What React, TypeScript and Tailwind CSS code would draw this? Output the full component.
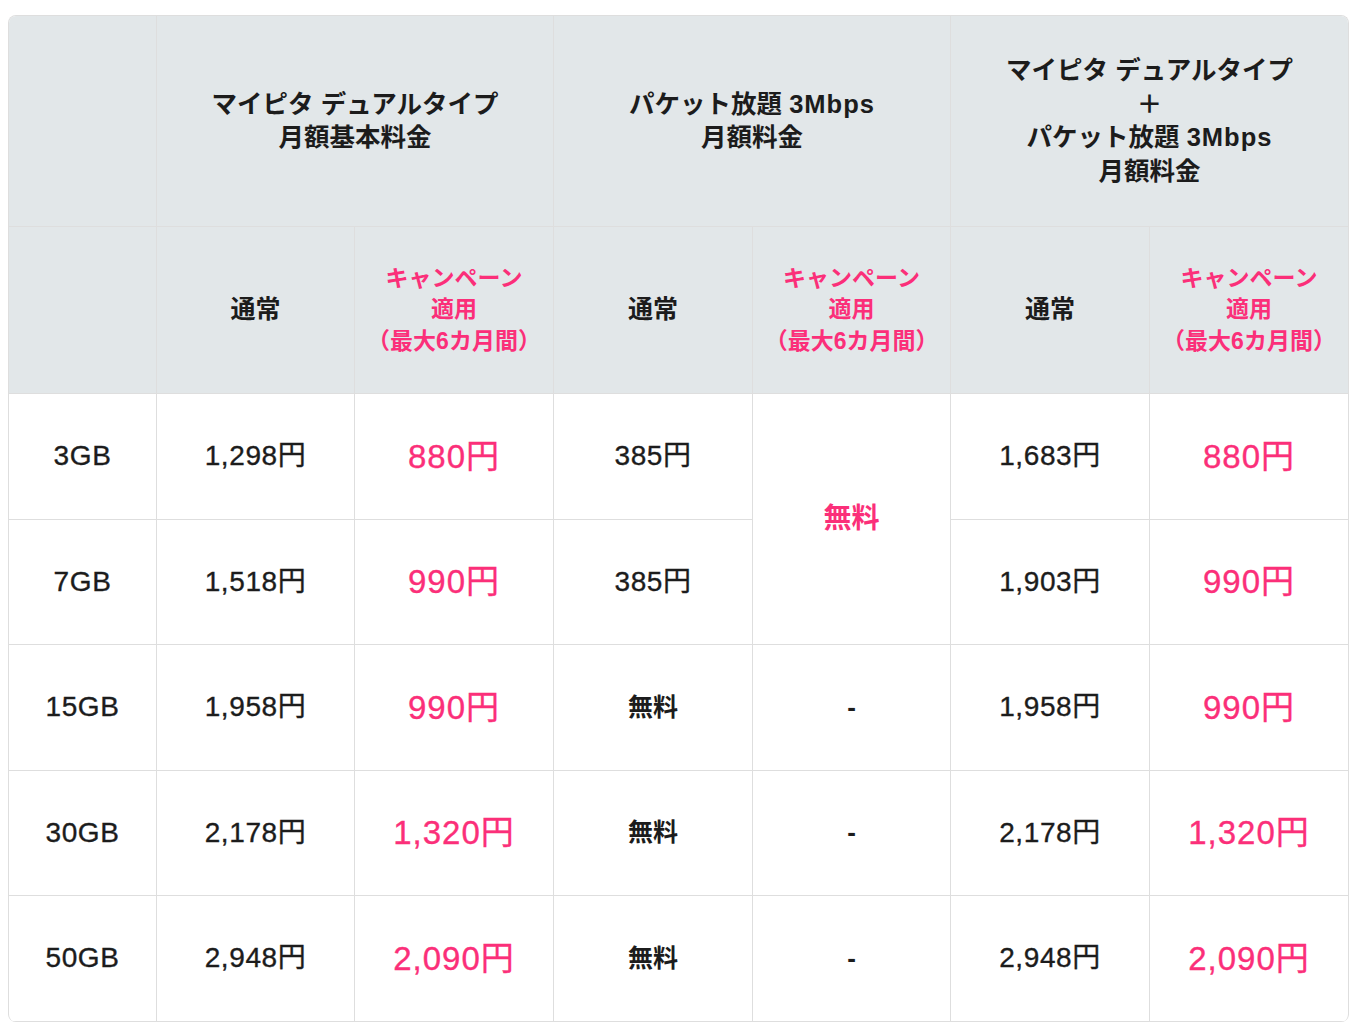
import * as React from "react";

const PINK = "text-[#fb2f79]";

type Row = {
  size: string;
  base: string;
  baseCampaign: string;
  packet: string;
  total: string;
  totalCampaign: string;
};

const rows: Row[] = [
  { size: "3GB", base: "1,298円", baseCampaign: "880円", packet: "385円", total: "1,683円", totalCampaign: "880円" },
  { size: "7GB", base: "1,518円", baseCampaign: "990円", packet: "385円", total: "1,903円", totalCampaign: "990円" },
  { size: "15GB", base: "1,958円", baseCampaign: "990円", packet: "無料", total: "1,958円", totalCampaign: "990円" },
  { size: "30GB", base: "2,178円", baseCampaign: "1,320円", packet: "無料", total: "2,178円", totalCampaign: "1,320円" },
  { size: "50GB", base: "2,948円", baseCampaign: "2,090円", packet: "無料", total: "2,948円", totalCampaign: "2,090円" },
];

const cell = "border-r border-b border-[#dedede] text-center align-middle p-0";
const last = "border-b border-[#dedede] text-center align-middle p-0";
// numbers are a touch heavier than Liberation regular
const num = "text-[28px] tracking-[0.6px] [-webkit-text-stroke:0.35px]";
const pinkNum = `text-[33px] tracking-[1px] [-webkit-text-stroke:0.35px] ${PINK}`;

function CampaignHead() {
  return (
    <div className={`text-[23px] leading-[31.5px] font-bold ${PINK}`}>
      キャンペーン
      <br />
      適用
      <br />
      （最大6カ月間）
    </div>
  );
}

export default function App() {
  return (
    <div
      className="min-h-screen bg-white pt-[15px] pl-2 text-[#1c1c1c]"
      style={{ fontFamily: '"Liberation Sans", "Noto Sans CJK JP", sans-serif' }}
    >
      <div className="w-[1341px] overflow-hidden rounded-lg border-t border-l border-r border-[#dedede]">
        <table className="w-full table-fixed border-separate border-spacing-0">
          <colgroup>
            <col className="w-[148px]" />
            <col className="w-[198px]" />
            <col className="w-[199px]" />
            <col className="w-[199px]" />
            <col className="w-[198px]" />
            <col className="w-[199px]" />
            <col />
          </colgroup>
          <thead className="bg-[#e2e7e9]">
            <tr className="h-[211px]">
              <th className={cell}></th>
              <th colSpan={2} className={cell}>
                <div className="text-[25.5px] leading-[33.5px] font-bold">
                  マイピタ デュアルタイプ
                  <br />
                  月額基本料金
                </div>
              </th>
              <th colSpan={2} className={cell}>
                <div className="text-[25.5px] leading-[33.5px] font-bold">
                  パケット放題 <span className="tracking-[1px]">3Mbps</span>
                  <br />
                  月額料金
                </div>
              </th>
              <th colSpan={2} className={last}>
                <div className="text-[25.5px] leading-[33.5px] font-bold">
                  マイピタ デュアルタイプ
                  <br />＋<br />
                  パケット放題 <span className="tracking-[1px]">3Mbps</span>
                  <br />
                  月額料金
                </div>
              </th>
            </tr>
            <tr className="h-[167px]">
              <th className={cell}></th>
              <th className={`${cell} text-[25px] font-bold`}>通常</th>
              <th className={cell}>
                <CampaignHead />
              </th>
              <th className={`${cell} text-[25px] font-bold`}>通常</th>
              <th className={cell}>
                <CampaignHead />
              </th>
              <th className={`${cell} text-[25px] font-bold`}>通常</th>
              <th className={last}>
                <CampaignHead />
              </th>
            </tr>
          </thead>
          <tbody>
            {rows.map((r, i) => (
              <tr key={r.size} className="h-[125.5px]">
                <td className={`${cell} ${num}`}>{r.size}</td>
                <td className={`${cell} ${num}`}>{r.base}</td>
                <td className={`${cell} ${pinkNum}`}>{r.baseCampaign}</td>
                <td className={`${cell} ${r.packet === "無料" ? "text-[25px] font-bold" : num}`}>
                  {r.packet}
                </td>
                {i === 0 && (
                  <td rowSpan={2} className={`${cell} text-[28px] font-bold ${PINK}`}>
                    無料
                  </td>
                )}
                {i >= 2 && <td className={`${cell} text-[26px] font-bold`}>-</td>}
                <td className={`${cell} ${num}`}>{r.total}</td>
                <td className={`${last} ${pinkNum}`}>{r.totalCampaign}</td>
              </tr>
            ))}
          </tbody>
        </table>
      </div>
    </div>
  );
}
